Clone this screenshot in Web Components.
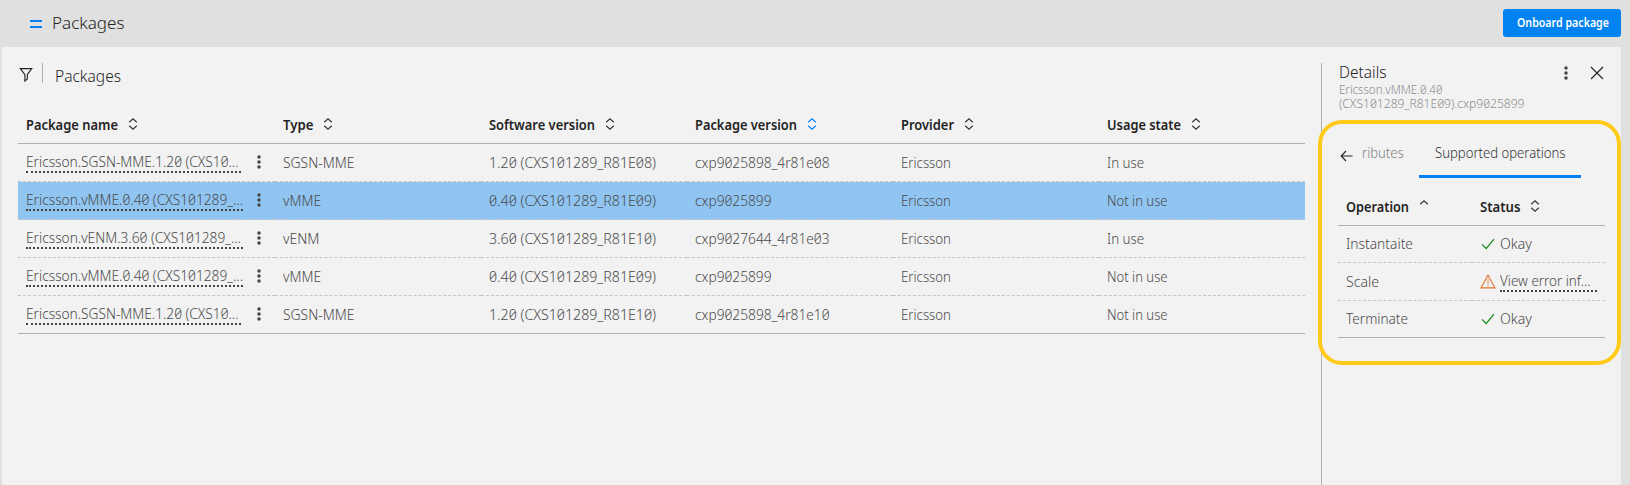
<!DOCTYPE html>
<html lang="en">
<head>
<meta charset="utf-8">
<title>Packages</title>
<style>
html,body{margin:0;height:100%;overflow:hidden;background:#e0e0e0}
</style>
</head>
<body>
<packages-app></packages-app>
<script>
const define = (name, html, init) => customElements.define(name, class extends HTMLElement {
  connectedCallback() {
    if (this.shadowRoot) return;
    const t = document.createElement('template');
    t.innerHTML = typeof html === 'function' ? html(this) : html;
    this.attachShadow({mode: 'open'}).append(t.content.cloneNode(true));
    if (init) init(this);
  }
});

/* Text condensed horizontally to a given advance width. */
define('ui-text', `<style>
  :host{display:inline-block;white-space:nowrap;flex:none}
  span{display:inline-block;transform-origin:0 50%;white-space:nowrap}
</style><span><slot></slot></span>`, el => {
  const w = +el.getAttribute('w') + 1, s = el.shadowRoot.querySelector('span');
  const n = s.getBoundingClientRect().width;
  el.style.width = w + 'px';
  s.style.transform = `scaleX(${w / n})`;
});

const icons = {
  menu: [12, 8, '<path d="M0 1h12M0 7h12" stroke="#0082f0" stroke-width="2"/>'],
  filter: [14, 16, '<path d="M1.3 1.6h11.4L8.3 7.6v4.3L5.9 14V7.6z"/>'],
  kebab: [4, 14, '<g fill="currentColor" stroke="none"><circle cx="2" cy="2" r="1.75"/><circle cx="2" cy="7" r="1.75"/><circle cx="2" cy="12" r="1.75"/></g>'],
  close: [14, 14, '<path d="M1 1l12 12M13 1L1 13"/>'],
  sort: [10, 12, '<path d="M1.2 4.2L5 .8l3.8 3.4M1.2 7.8L5 11.2l3.8-3.4"/>'],
  asc: [10, 12, '<path d="M1.2 4.2L5 .8l3.8 3.4"/>'],
  back: [13, 12, '<path d="M12.5 6H1.2M6 1L1.2 6 6 11"/>'],
  check: [14, 12, '<path d="M1 6.3l4.2 4.2L13 1.2" stroke="#1e8a1e" stroke-width="1.2"/>'],
  warn: [16, 15, '<path d="M8 1.2L15 13.9H1z" stroke="#e0762f" stroke-width="1.1"/><path d="M8 5.2v4.4M8 10.6v2" stroke="#e0762f" stroke-width="1.3" opacity=".7"/>']
};
define('ui-icon', el => {
  const [w, h, body] = icons[el.getAttribute('name')];
  return `<style>:host{display:block;flex:none;width:${w}px;height:${h}px}svg{display:block}</style>
  <svg width="${w}" height="${h}" viewBox="0 0 ${w} ${h}" fill="none" stroke="currentColor" stroke-width="1.15">${body}</svg>`;
});

define('head-cell', el => `<style>
  :host{display:flex;align-items:center;padding:0 0 0 8px;height:37px;color:#242424;font-weight:600;font-size:14.5px;line-height:34px;box-sizing:border-box}
  ui-text{padding-bottom:2px}
  ui-icon{margin:0 0 2px 9.5px;color:${el.getAttribute('color') || '#333'}}
</style><ui-text w="${el.getAttribute('w')}"><slot></slot></ui-text><ui-icon name="${el.getAttribute('icon') || 'sort'}"></ui-icon>`);

define('body-cell', `<style>
  :host{display:flex;align-items:center;box-sizing:border-box;padding:0 8px 2px;border-bottom:1px dashed #c6c6c6;color:#4a4a4a;line-height:20px;min-width:0}
  :host([last]){border-bottom:1px solid #b0b0b0}
</style><slot></slot>`);

define('text-link', el => `<style>
  :host{display:block;flex:none;box-sizing:border-box;width:${el.getAttribute('line')}px;height:22px;margin-top:1px;border-bottom:2px dotted #444;line-height:20px}
</style><slot></slot>`);

define('package-table', () => {
  const heads = [['Package name',91],['Type',29.5],['Software version',105],['Package version',101],['Provider',52],['Usage state',73]];
  const A=['SGSN-MME',70.5], V=['vMME',37], N=['vENM',35.5], I=['In use',36], O=['Not in use',59.5], E=['Ericsson',49];
  const sg=['Ericsson.SGSN-MME.1.20 (CXS10...',211.5,215], vm=['Ericsson.vMME.0.40 (CXS101289_...',216,217], vn=['Ericsson.vENM.3.60 (CXS101289_...',214,217];
  const rows = [
    [sg,A,['1.20 (CXS101289_R81E08)',166],['cxp9025898_4r81e08',133.5],E,I],
    [vm,V,['0.40 (CXS101289_R81E09)',166],['cxp9025899',75.5],E,O],
    [vn,N,['3.60 (CXS101289_R81E10)',166],['cxp9027644_4r81e03',133.5],E,I],
    [vm,V,['0.40 (CXS101289_R81E09)',166],['cxp9025899',75.5],E,O],
    [sg,A,['1.20 (CXS101289_R81E10)',166],['cxp9025898_4r81e10',133.5],E,O]];
  return `<style>
    :host{display:block}
    .row{display:grid;grid-template-columns:1.25fr repeat(5,1fr);height:38px}
    .head{border-bottom:1px solid #b0b0b0;height:37px}
    .sel{background:#90c5f2}
    .k{margin:1px 6.4px 0 auto;color:#444}
  </style>
  <div class="row head">${heads.map(([t,w],i)=>`<head-cell w="${w}" ${i===3?'color="#0082f0"':''}>${t}</head-cell>`).join('')}</div>
  ${rows.map((r,ri)=>`<div class="row ${ri===1?'sel':''}">${r.map(([t,w,l],i)=>`<body-cell ${ri===4?'last':''}>${
    i===0?`<text-link line="${l}"><ui-text w="${w}">${t}</ui-text></text-link><ui-icon class="k" name="kebab"></ui-icon>`:`<ui-text w="${w}">${t}</ui-text>`}</body-cell>`).join('')}</div>`).join('')}`;
});

define('operations-table', `<style>
  :host{display:block}
  .row{display:grid;grid-template-columns:1fr 1fr;height:37px}
  .tall{height:38px}
  .head{border-bottom:1px solid #b0b0b0}
  .i{width:20.5px;display:flex;align-items:center}
  .i ui-icon{margin-top:2px}
  .i [name=check]{margin-left:1px}
</style>
<div class="row head"><head-cell w="62" icon="asc">Operation</head-cell><head-cell w="39.5">Status</head-cell></div>
<div class="row"><body-cell><ui-text w="66">Instantaite</ui-text></body-cell><body-cell><span class="i"><ui-icon name="check"></ui-icon></span><ui-text w="31">Okay</ui-text></body-cell></div>
<div class="row tall"><body-cell><ui-text w="32">Scale</ui-text></body-cell><body-cell><span class="i"><ui-icon name="warn"></ui-icon></span><text-link line="97"><ui-text w="89.5">View error inf...</ui-text></text-link></body-cell></div>
<div class="row"><body-cell last><ui-text w="61">Terminate</ui-text></body-cell><body-cell last><span class="i"><ui-icon name="check"></ui-icon></span><ui-text w="31">Okay</ui-text></body-cell></div>`);

define('tab-bar', `<style>
  :host{display:flex;align-items:flex-start;height:48px;line-height:37px}
  ui-icon{margin:20px 0 0 2px;color:#242424}
  .prev{color:#808080;margin-left:9px}
  .active{color:#333;margin-left:15.5px;padding:0 16px;height:48px;border-bottom:3px solid #0082f0;box-sizing:border-box;width:162px}
  .prev,.active{padding-top:4px}
</style><ui-icon name="back"></ui-icon><div class="prev"><ui-text w="40.5">ributes</ui-text></div><div class="active"><ui-text w="129.5">Supported operations</ui-text></div>`);

define('details-panel', `<style>
  :host{display:block;position:relative;box-sizing:border-box;width:300px;margin-top:16px;border-left:1px solid #b0b0b0;padding:0 16px}
  header{display:flex;height:67px;padding-left:.5px;box-sizing:border-box}
  .t{flex:1;font-size:15.5px;color:#242424}
  .t div{height:18px;line-height:19px}
  .t .s{font-size:12.5px;height:14px;line-height:14px;color:#8c8c8c}
  .t .first{margin-top:1.5px}
  .k{margin:3px 17px 0 0;color:#444}
  .x{margin:3px 1px 0 5px;color:#242424}
  operations-table{margin-top:10px}
  .mark{position:absolute;left:-4px;top:57px;width:303px;height:245px;box-sizing:border-box;border:4px solid #ffca1a;border-radius:24px;background:#f2f2f2}
  tab-bar,operations-table,header{position:relative;z-index:1}
</style>
<div class="mark"></div>
<header><div class="t"><div><ui-text w="46.5">Details</ui-text></div><div class="s first"><ui-text w="102.5">Ericsson.vMME.0.40</ui-text></div><div class="s"><ui-text w="184.5">(CXS101289_R81E09).cxp9025899</ui-text></div></div>
<ui-icon class="k" name="kebab"></ui-icon><ui-icon class="x" name="close"></ui-icon></header>
<tab-bar></tab-bar><operations-table></operations-table>`);

define('app-header', `<style>
  :host{display:flex;align-items:center;height:47px;box-sizing:border-box;padding:0 9px 0 30px;background:#e0e0e0}
  .menu{margin-top:1px}
  .title{font-size:16.5px;color:#242424;margin:0 0 2px 10px}
  button{margin:0 0 1px auto;width:118px;height:28px;border:0;border-radius:3px;background:#0082f0;color:#fff;font:600 12.5px/26px "Noto Sans",sans-serif;padding:0 0 0 13.5px;text-align:left}
</style><ui-icon class="menu" name="menu"></ui-icon><ui-text class="title" w="71.5">Packages</ui-text><button><ui-text w="91">Onboard package</ui-text></button>`);

define('packages-app', `<style>
  :host{display:flex;flex-direction:column;height:485px;font:300 15px/20px "Noto Sans",sans-serif;font-feature-settings:"zero"}
  main{flex:1;display:flex;margin:0 9px 0 2px;background:#f2f2f2}
  .left{flex:1;min-width:0;padding:16px 16px 0}
  .bar{display:flex;height:43px;color:#242424}
  .f{margin:4px 0 0 1px}
  .d{width:1px;height:20px;background:#b0b0b0;margin:0 11.5px 0 9px}
  .bar ui-text{font-size:15.5px;line-height:26px}
</style>
<app-header></app-header>
<main><section class="left"><div class="bar"><ui-icon class="f" name="filter"></ui-icon><span class="d"></span><ui-text w="65">Packages</ui-text></div><package-table></package-table></section>
<details-panel></details-panel></main>`);
</script>
</body>
</html>
